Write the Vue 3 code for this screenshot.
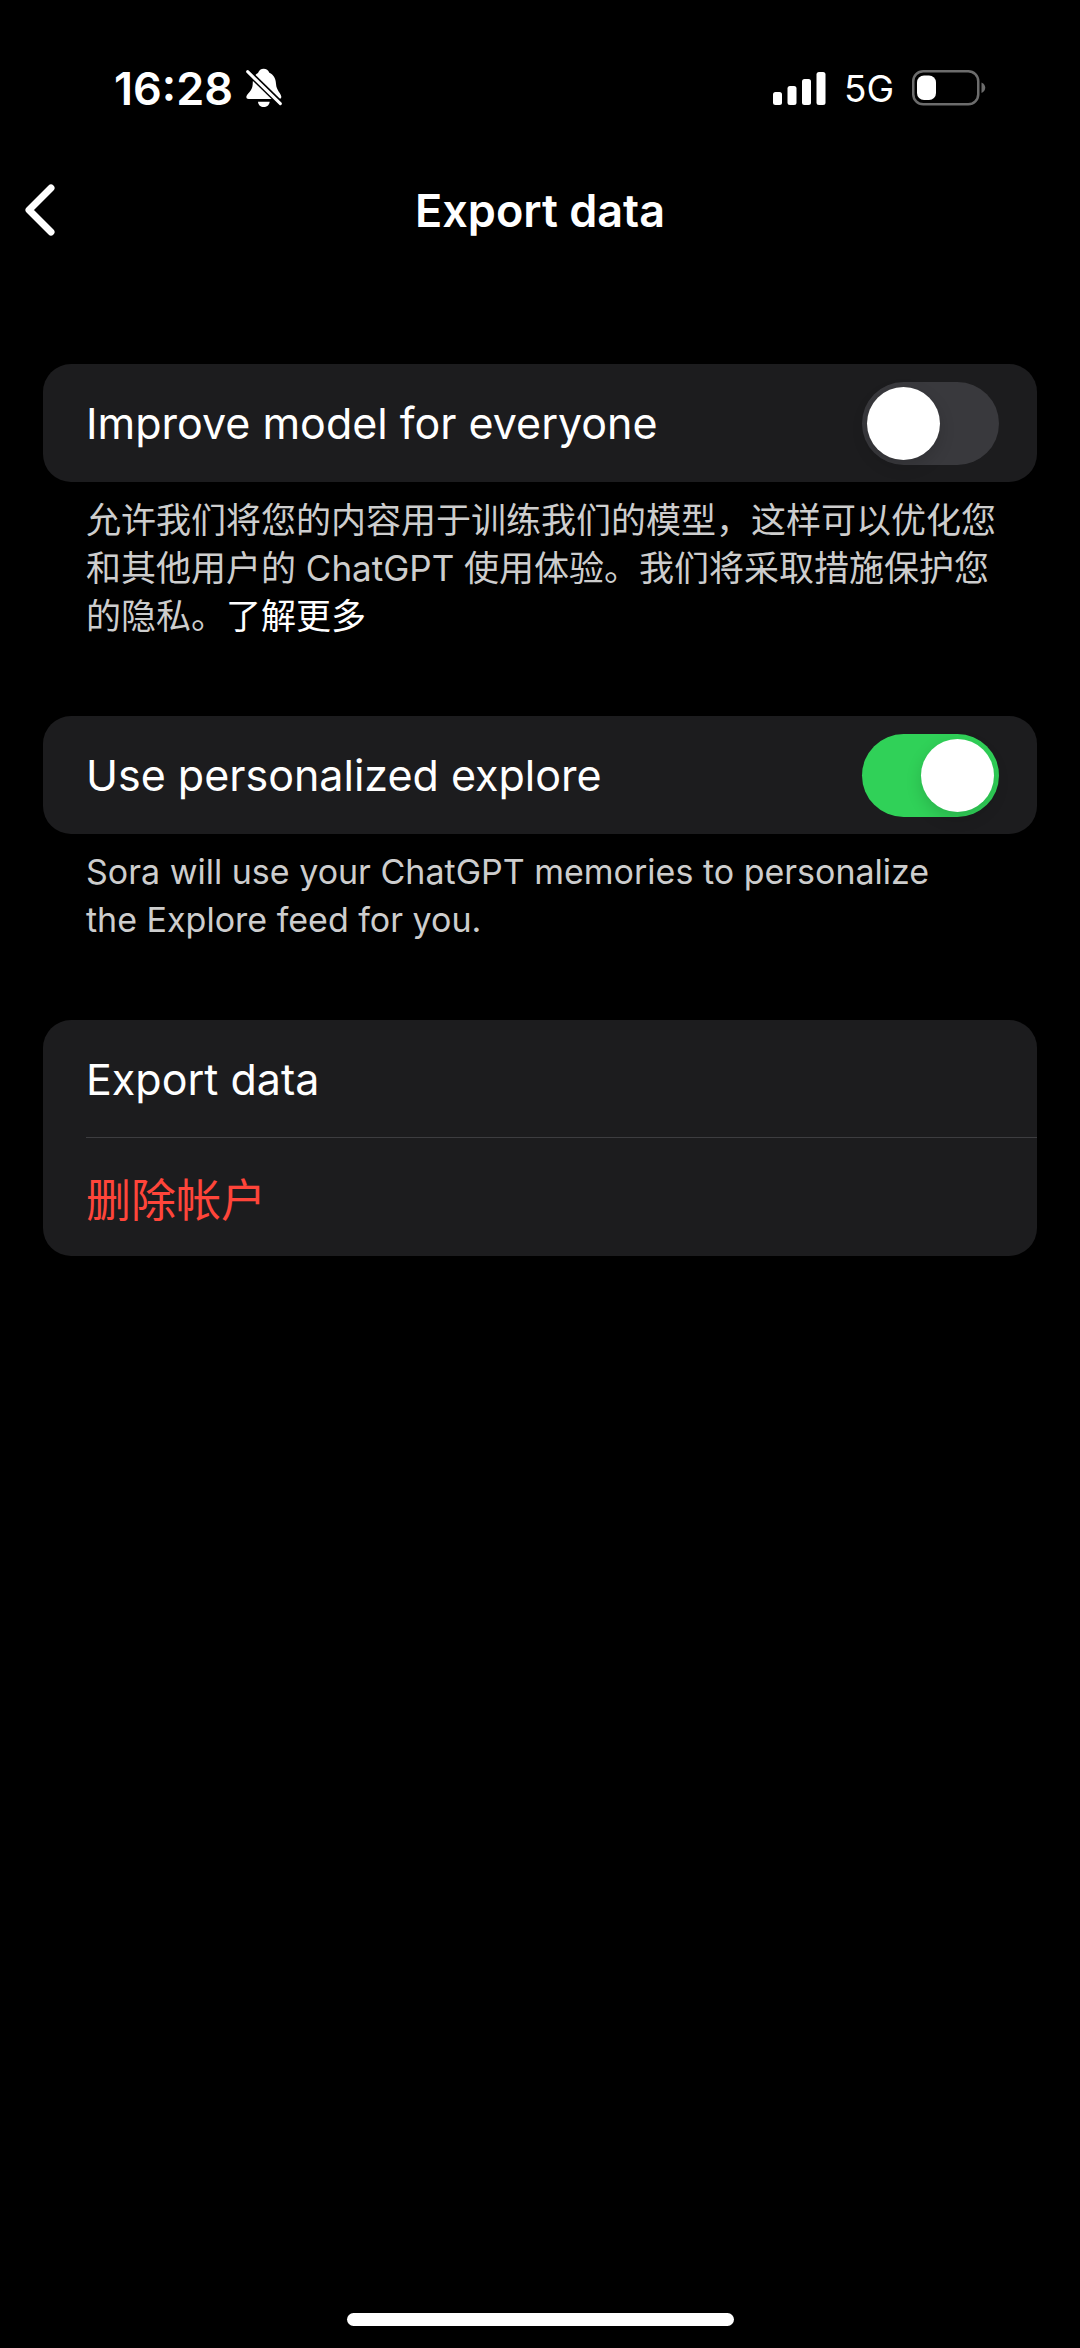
<script setup>
import { ref } from 'vue'

const improveModel = ref(false)
const personalizedExplore = ref(true)
</script>

<template>
  <div class="screen">
    <div class="status-bar">
      <div class="status-group">
        <span class="time">16:28</span>
        <svg class="bell" viewBox="0 0 108 120" width="36" height="40" role="img" aria-label="Silent mode">
          <path
            fill="#fff"
            d="M1 87 C1 78 19 70 20 50 C20 32 25 20 36 15 C39 6 45 2 53 2 C61 2 67 6 70 14 C83 20 89 31 90 47 C91 68 106 76 106 87 C106 91 103 93 99 93 H8 C3 93 1 91 1 87 Z"
          />
          <path fill="#fff" d="M36 101 H71 C70 111 62 117 53 117 C44 117 37 111 36 101 Z" />
          <path d="M-6 0 L112 115" stroke="#000" stroke-width="18" />
          <path d="M5 11 L103 107" stroke="#fff" stroke-width="9" stroke-linecap="round" />
        </svg>
      </div>
      <div class="status-group right">
        <svg viewBox="0 0 53 34" width="53" height="34" fill="#fff" role="img" aria-label="Signal">
          <rect x="0" y="21" width="9" height="13" rx="2.5" />
          <rect x="14.5" y="15" width="9" height="19" rx="2.5" />
          <rect x="29" y="8" width="9" height="26" rx="2.5" />
          <rect x="43.5" y="1" width="9" height="33" rx="2.5" />
        </svg>
        <span class="network">5G</span>
        <svg viewBox="0 0 74 36" width="74" height="36" role="img" aria-label="Battery">
          <rect x="1.25" y="1.25" width="65" height="33" rx="10" fill="none" stroke="#6c6c6c" stroke-width="2.5" />
          <rect x="5" y="5.5" width="19" height="24.5" rx="7" fill="#fff" />
          <path d="M69.5 12.5 C74.5 14.5 74.5 21 69.5 23 Z" fill="#6c6c6c" />
        </svg>
      </div>
    </div>

    <header class="nav-bar">
      <button class="back" type="button" aria-label="Back">
        <svg viewBox="0 0 31 52" width="31" height="52" fill="none" stroke="#fff" stroke-width="7" stroke-linecap="round" stroke-linejoin="round">
          <path d="M27 4 L5 26 L27 48" />
        </svg>
      </button>
      <h1>Export data</h1>
    </header>

    <main class="settings">
      <section>
        <label class="card row">
          <span>Improve model for everyone</span>
          <input v-model="improveModel" class="switch" type="checkbox" role="switch" />
        </label>
        <p class="note chinese" lang="zh-CN">
          <span>允许我们将您的内容用于训练我们的模型，这样可以优化您和其他用户的 ChatGPT 使用体验。我们将采取措施保护您的隐私。</span><a href="#">了解更多</a>
        </p>
      </section>

      <section>
        <label class="card row">
          <span>Use personalized explore</span>
          <input v-model="personalizedExplore" class="switch" type="checkbox" role="switch" />
        </label>
        <p class="note">Sora will use your ChatGPT memories to personalize the Explore feed for you.</p>
      </section>

      <section class="card">
        <button class="row" type="button">Export data</button>
        <hr />
        <button class="row danger" type="button" lang="zh-CN">删除帐户</button>
      </section>
    </main>

    <div class="home-indicator"></div>
  </div>
</template>

<style>
body {
  background: #000;
}
</style>

<style scoped>
.screen {
  box-sizing: border-box;
  display: flex;
  flex-direction: column;
  min-height: 100vh;
  background: #000;
  color: #fff;
  font-family: Inter, "Noto Sans CJK SC", sans-serif;
  font-size: 45px;
}

.status-bar {
  display: flex;
  align-items: center;
  justify-content: space-between;
  padding: 60px 94px 0 114px;
  height: 56px;
}

.status-group {
  display: flex;
  align-items: center;
  gap: 13px;
}

.status-group.right {
  gap: 18px;
}

.time {
  font-weight: 600;
}

.network {
  font-size: 37px;
}

.nav-bar {
  display: grid;
  grid-template-columns: 1fr auto 1fr;
  align-items: center;
  height: 100px;
  margin-top: 44px;
}

.back {
  display: flex;
  justify-self: start;
  padding: 0 24px;
  border: 0;
  background: none;
}

h1 {
  margin: 0;
  font-size: 45px;
  font-weight: 600;
}

.settings {
  display: flex;
  flex: 1;
  flex-direction: column;
  gap: 76px;
  padding: 104px 43px 0;
}

.card {
  overflow: hidden;
  border-radius: 28px;
  background: #1c1c1e;
}

.row {
  box-sizing: border-box;
  display: flex;
  align-items: center;
  justify-content: space-between;
  width: 100%;
  height: 118px;
  padding: 0 38px 0 43px;
  border: 0;
  color: #fff;
  font-family: inherit;
  font-size: 43px;
  text-align: left;
}

button.row {
  background: none;
}

.row.danger {
  color: #ff453a;
  font-size: 45px;
}

hr {
  height: 1px;
  margin: -1px 0 0 43px;
  border: 0;
  background: #3d3d40;
}

.note {
  margin: 0;
  padding: 14px 60px 0 43px;
  color: #cdcdcd;
  font-size: 34px;
  line-height: 48px;
}

.note.chinese {
  padding-right: 40px;
  font-size: 35px;
}

.note a {
  color: #fff;
  text-decoration: none;
}

.switch {
  appearance: none;
  display: flex;
  flex: none;
  box-sizing: border-box;
  width: 137px;
  height: 83px;
  margin: 0;
  padding: 5px;
  border-radius: 42px;
  background: #39393d;
}

.switch::before {
  content: "";
  width: 73px;
  height: 73px;
  border-radius: 50%;
  background: #fff;
  box-shadow: 0 6px 16px rgb(0 0 0 / 15%);
}

.switch:checked {
  justify-content: flex-end;
  background: #30d158;
}

.home-indicator {
  align-self: center;
  width: 387px;
  height: 13px;
  margin: 22px 0;
  border-radius: 7px;
  background: #fff;
}
</style>
